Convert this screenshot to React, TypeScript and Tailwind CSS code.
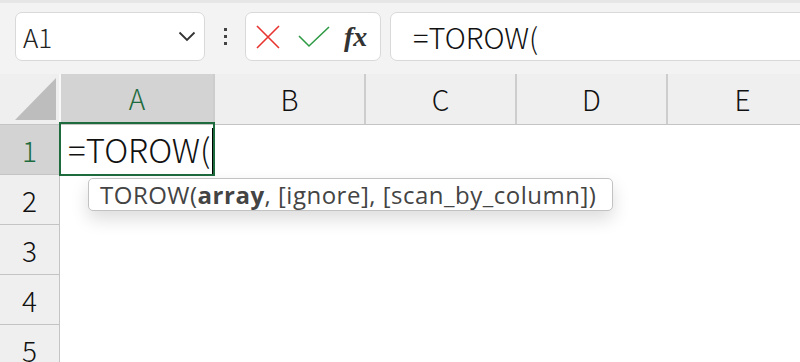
import React from "react"

const cols = ["A", "B", "C", "D", "E"]
const rows = [1, 2, 3, 4, 5]

function Chevron() {
  return (
    <svg width="18" height="11" viewBox="0 0 18 11" fill="none">
      <path d="M1.5 1.5 L9 9 L16.5 1.5" stroke="#333" strokeWidth="1.8" />
    </svg>
  )
}

export default function App() {
  return (
    <div
      className="w-[800px] h-[362px] overflow-hidden bg-white"
      style={{ fontFamily: "'Noto Sans CJK JP', 'Noto Sans', sans-serif" }}
    >
      {/* Formula bar */}
      <div className="h-[74px] bg-[#f3f3f3] border-t-[3px] border-[#e6e6e6] flex items-start pt-[9px] pl-[15px]">
        <div className="w-[190px] h-[49px] bg-white border border-[#d9d9d9] rounded-[7px] flex items-center justify-between pl-[7px] pr-[8px]">
          <span className="text-[26px] font-light text-[#222] leading-none">A1</span>
          <Chevron />
        </div>
        <div className="w-[40px] h-[49px] flex flex-col items-center justify-center gap-[4px]">
          <div className="w-[3px] h-[3px] bg-[#444]" />
          <div className="w-[3px] h-[3px] bg-[#444]" />
          <div className="w-[3px] h-[3px] bg-[#444]" />
        </div>
        <div className="w-[136px] h-[49px] bg-white border border-[#d9d9d9] rounded-[7px] flex items-center pl-[10px] gap-[18px]">
          <svg width="24" height="24" viewBox="0 0 24 24">
            <path d="M1 1 L23 23 M23 1 L1 23" stroke="#e8332f" strokeWidth="1.6" />
          </svg>
          <svg width="32" height="22" viewBox="0 0 32 22">
            <path d="M1 10 L11 20 L31 1" stroke="#2f9a45" strokeWidth="1.6" fill="none" />
          </svg>
          <span
            className="text-[28px] italic font-bold text-[#333] leading-none -ml-[4px]"
            style={{ fontFamily: "'Liberation Serif', 'DejaVu Serif', serif" }}
          >
            fx
          </span>
        </div>
        <div className="flex-1 h-[49px] ml-[9px] -mr-[10px] bg-white border border-[#d9d9d9] rounded-[7px] flex items-center pl-[22px]">
          <span className="text-[29px] font-light text-[#111] leading-none">=TOROW(</span>
        </div>
      </div>

      {/* Grid */}
      <div className="relative">
        <div className="flex h-[51px] bg-[#efefef] border-b border-[#c4c4c4]">
          <div className="w-[61px] shrink-0 border-r-2 border-[#f8f8f8] relative overflow-hidden">
            <svg className="absolute left-0 top-0" width="59" height="50" viewBox="0 0 59 50">
              <path d="M15 46 L56 4 L56 46 Z" fill="#bdbdbd" />
            </svg>
          </div>
          {cols.map((c, i) => (
            <div
              key={c}
              className={
                i === 0
                  ? "w-[152px] shrink-0 bg-[#d3d3d3] border-b-2 border-[#1e6b3e] flex items-center justify-center text-[28px] font-light text-[#1e6b3e]"
                  : "w-[151px] shrink-0 border-l-2 border-[#cdcdcd] flex items-center justify-center text-[28px] font-light text-[#111]"
              }
            >
              {c}
            </div>
          ))}
        </div>
        {rows.map((r) => (
          <div key={r} className="flex h-[50px]">
            <div
              className={
                r === 1
                  ? "w-[60px] shrink-0 bg-[#d3d3d3] border-b border-r border-[#c4c4c4] flex items-center justify-center text-[28px] font-light text-[#1e6b3e]"
                  : "w-[60px] shrink-0 bg-[#efefef] border-b border-r border-[#c4c4c4] flex items-center justify-center text-[28px] font-light text-[#111]"
              }
            >
              {r}
            </div>
            <div className="flex-1 bg-white" />
          </div>
        ))}

        {/* Active cell */}
        <div className="absolute left-[59px] top-[48px] w-[156px] h-[54px] border-2 border-[#1e6b3e] flex items-center pl-[7px]">
          <span className="text-[33px] font-light text-[#111] leading-none">=TOROW(</span>
          <div className="w-px h-[46px] bg-black ml-[1px] mt-[4px]" />
        </div>

        {/* Function tooltip */}
        <div className="absolute left-[88px] top-[104px] w-[525px] h-[33px] bg-white border border-[#c2c2c2] rounded-[5px] shadow-[0_8px_18px_rgba(0,0,0,0.14)] flex items-center pl-[11px]">
          <span
            className="text-[24px] tracking-[0.5px] text-[#444] leading-none whitespace-nowrap"
            style={{ fontFamily: "'Open Sans', 'Noto Sans', sans-serif" }}
          >
            TOROW(<b>array</b>, [ignore], [scan_by_column])
          </span>
        </div>
      </div>
    </div>
  )
}
